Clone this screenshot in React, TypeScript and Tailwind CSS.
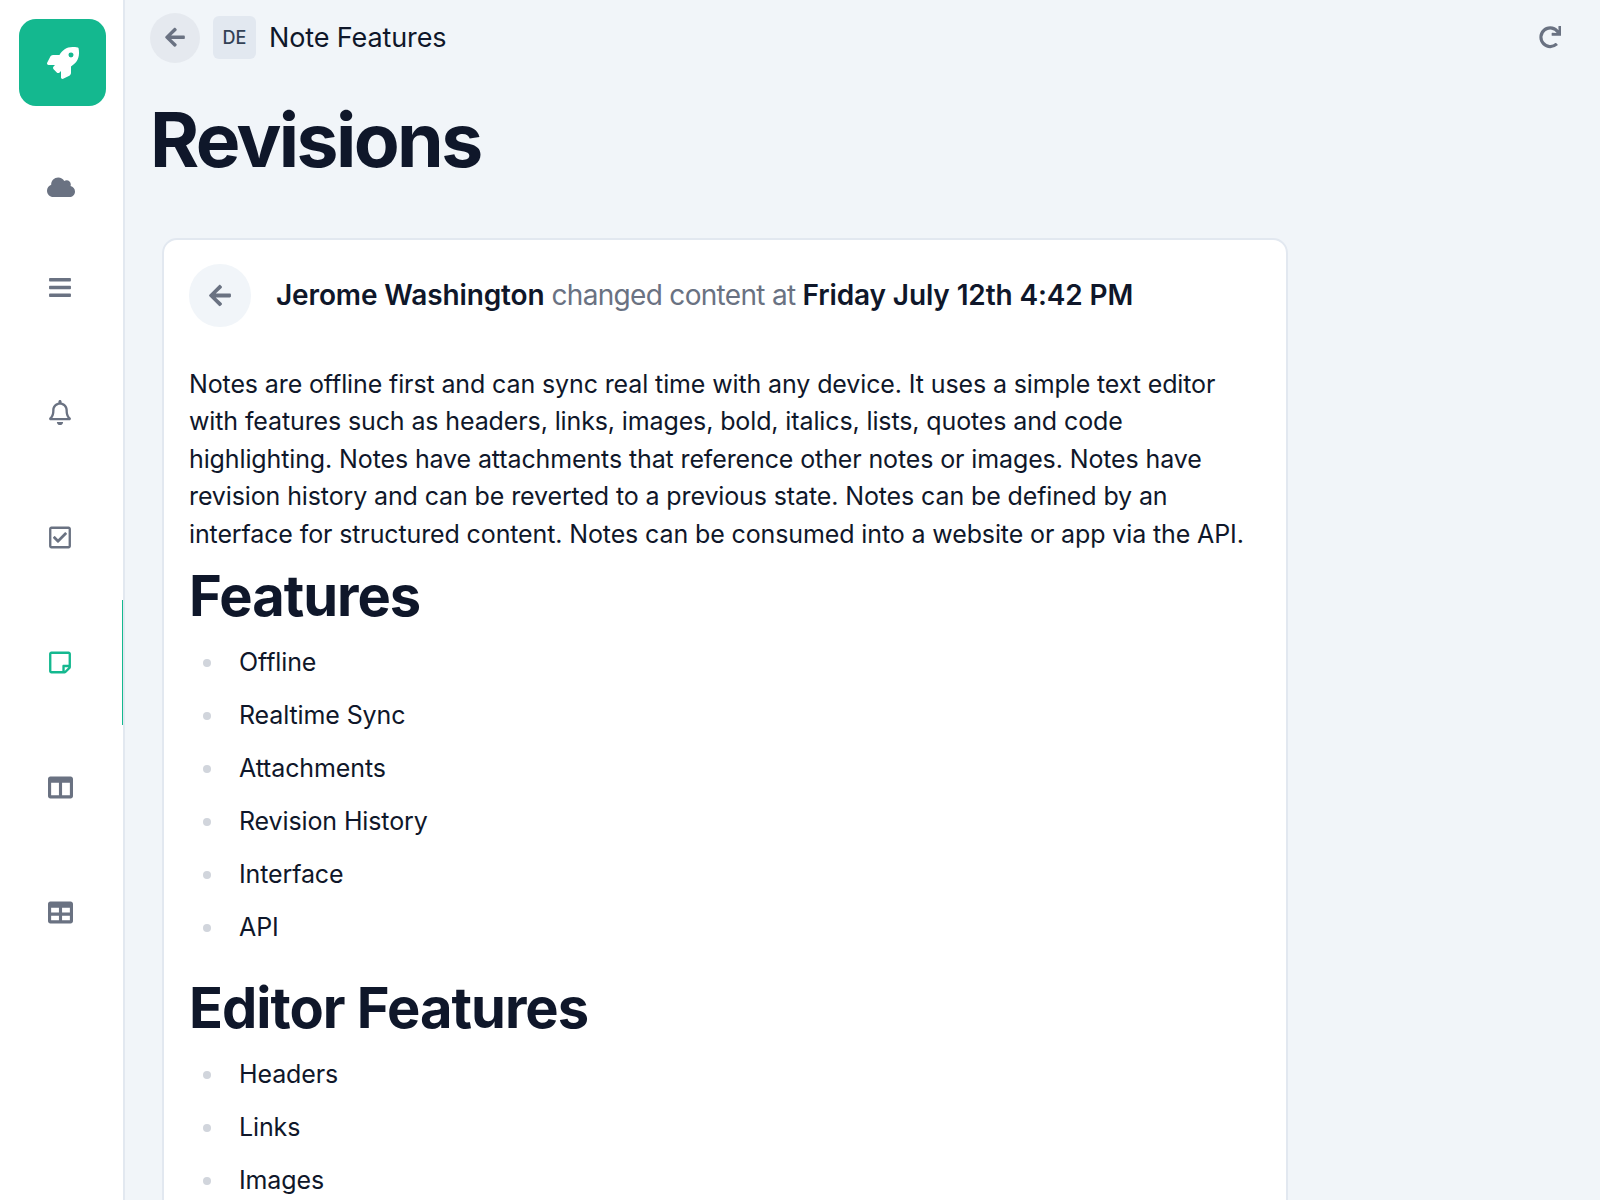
import { FaArrowLeft, FaBars, FaCloud, FaColumns, FaRedo, FaRegBell, FaRegCheckSquare, FaRegStickyNote, FaRocket, FaTable } from 'react-icons/fa';

const features = ['Offline', 'Realtime Sync', 'Attachments', 'Revision History', 'Interface', 'API'];
const editorFeatures = ['Headers', 'Links', 'Images'];

function NavItem({ height, active, children }: { height: string; active?: boolean; children: React.ReactNode }) {
    return (
        <div className={`${height} flex items-center justify-center pr-[3px] border-r-[1.5px] ${active ? 'border-[#14b88f] text-[#14b88f]' : 'border-transparent text-gray-500'}`}>
            {children}
        </div>
    );
}

function BulletList({ items }: { items: string[] }) {
    return (
        <ul className="flex flex-col mt-[5.500px]">
            {items.map((item) => (
                <li key={item} className="h-[53px] flex items-center pl-[14px]">
                    <span className="w-2 h-2 rounded-full bg-gray-300 mr-[28px]" />
                    <span>{item}</span>
                </li>
            ))}
        </ul>
    );
}

export default function App() {
    return (
        <div className="w-[1600px] h-[1200px] flex overflow-hidden bg-[#f1f5f9] text-[#0f172a] font-['Inter',sans-serif]">
            {/* Sidebar */}
            <aside className="w-[125px] shrink-0 bg-white border-r-2 border-[#e2e8f0] flex flex-col">
                <div className="h-[125px] p-[19px] pr-[17px]">
                    <div className="w-[87px] h-[87px] rounded-[17px] bg-[#14b88f] flex items-center justify-center">
                        <FaRocket className="w-[32px] h-[32px] text-white" />
                    </div>
                </div>
                <NavItem height="h-[125px]"><FaCloud className="w-[28px] h-[22.500px] ml-[2px]" /></NavItem>
                <NavItem height="h-[75px] mb-[25px]"><FaBars className="w-[22px] h-[25px]" /></NavItem>
                <NavItem height="h-[125px]"><FaRegBell className="w-[22px] h-[25px]" /></NavItem>
                <NavItem height="h-[125px]"><FaRegCheckSquare className="w-[22px] h-[25px]" /></NavItem>
                <NavItem height="h-[125px]" active><FaRegStickyNote className="w-[22px] h-[25px]" /></NavItem>
                <NavItem height="h-[125px]"><FaColumns className="w-[25px] h-[25px] ml-[1px]" /></NavItem>
                <NavItem height="h-[125px]"><FaTable className="w-[25px] h-[25px] ml-[1px]" /></NavItem>
            </aside>

            {/* Main */}
            <main className="flex-1 min-w-0 pl-[25px] pr-[25px]">
                <header className="h-[75px] flex items-center">
                    <button className="w-[50px] h-[50px] rounded-full bg-[#e5e9ef] flex items-center justify-center">
                        <FaArrowLeft className="w-[20px] h-[22.500px] text-gray-500" />
                    </button>
                    <div className="ml-[13px] w-[43px] h-[43px] rounded-md bg-[#e2e8f0] flex items-center justify-center text-[18px] font-medium text-[#334155]">DE</div>
                    <span className="ml-[13px] text-[27px] leading-[35px] tracking-[-0.120px]">Note Features</span>
                    <div className="ml-auto mr-[14px]"><FaRedo className="w-[22.500px] h-[22.500px] text-gray-500" /></div>
                </header>
                <h1 className="text-[75px] leading-[100px] font-bold tracking-[-2.600px] mt-[15px]">Revisions</h1>
                <article className="mt-[48px] ml-[12px] w-[1126px] bg-white border-2 border-[#e2e8f0] rounded-[15px] px-[25px] pt-[24px] pb-[100px]">
                    <div className="flex items-center">
                        <div className="w-[62px] h-[63px] rounded-full bg-[#f1f5f9] flex items-center justify-center">
                            <FaArrowLeft className="w-[22px] h-[25px] text-gray-500" />
                        </div>
                        <p className="ml-[25px] text-[28px] leading-[37px] font-semibold tracking-[-0.120px]">
                            Jerome Washington <span className="font-normal text-gray-500 tracking-[-0.680px]">changed content at</span> Friday July 12th 4:42 PM
                        </p>
                    </div>
                    <div className="mt-[38.600px] text-[25px] leading-[37.500px] tracking-[-0.120px]">
                        <p>
                            Notes are offline first and can sync real time with any device. It uses a simple text editor with features such as headers, links, images, bold, italics, lists, quotes and code highlighting. Notes have attachments that reference other notes or images. Notes have revision history and can be reverted to a previous state. Notes can be defined by an interface for structured content. Notes can be consumed into a website or app via the API.
                        </p>
                        <h2 className="text-[56px] leading-[70px] font-bold tracking-[-1px] mt-[8px]">Features</h2>
                        <BulletList items={features} />
                        <h2 className="text-[56px] leading-[70px] font-bold tracking-[-1px] mt-[18.500px]">Editor Features</h2>
                        <BulletList items={editorFeatures} />
                    </div>
                </article>
            </main>
        </div>
    );
}
